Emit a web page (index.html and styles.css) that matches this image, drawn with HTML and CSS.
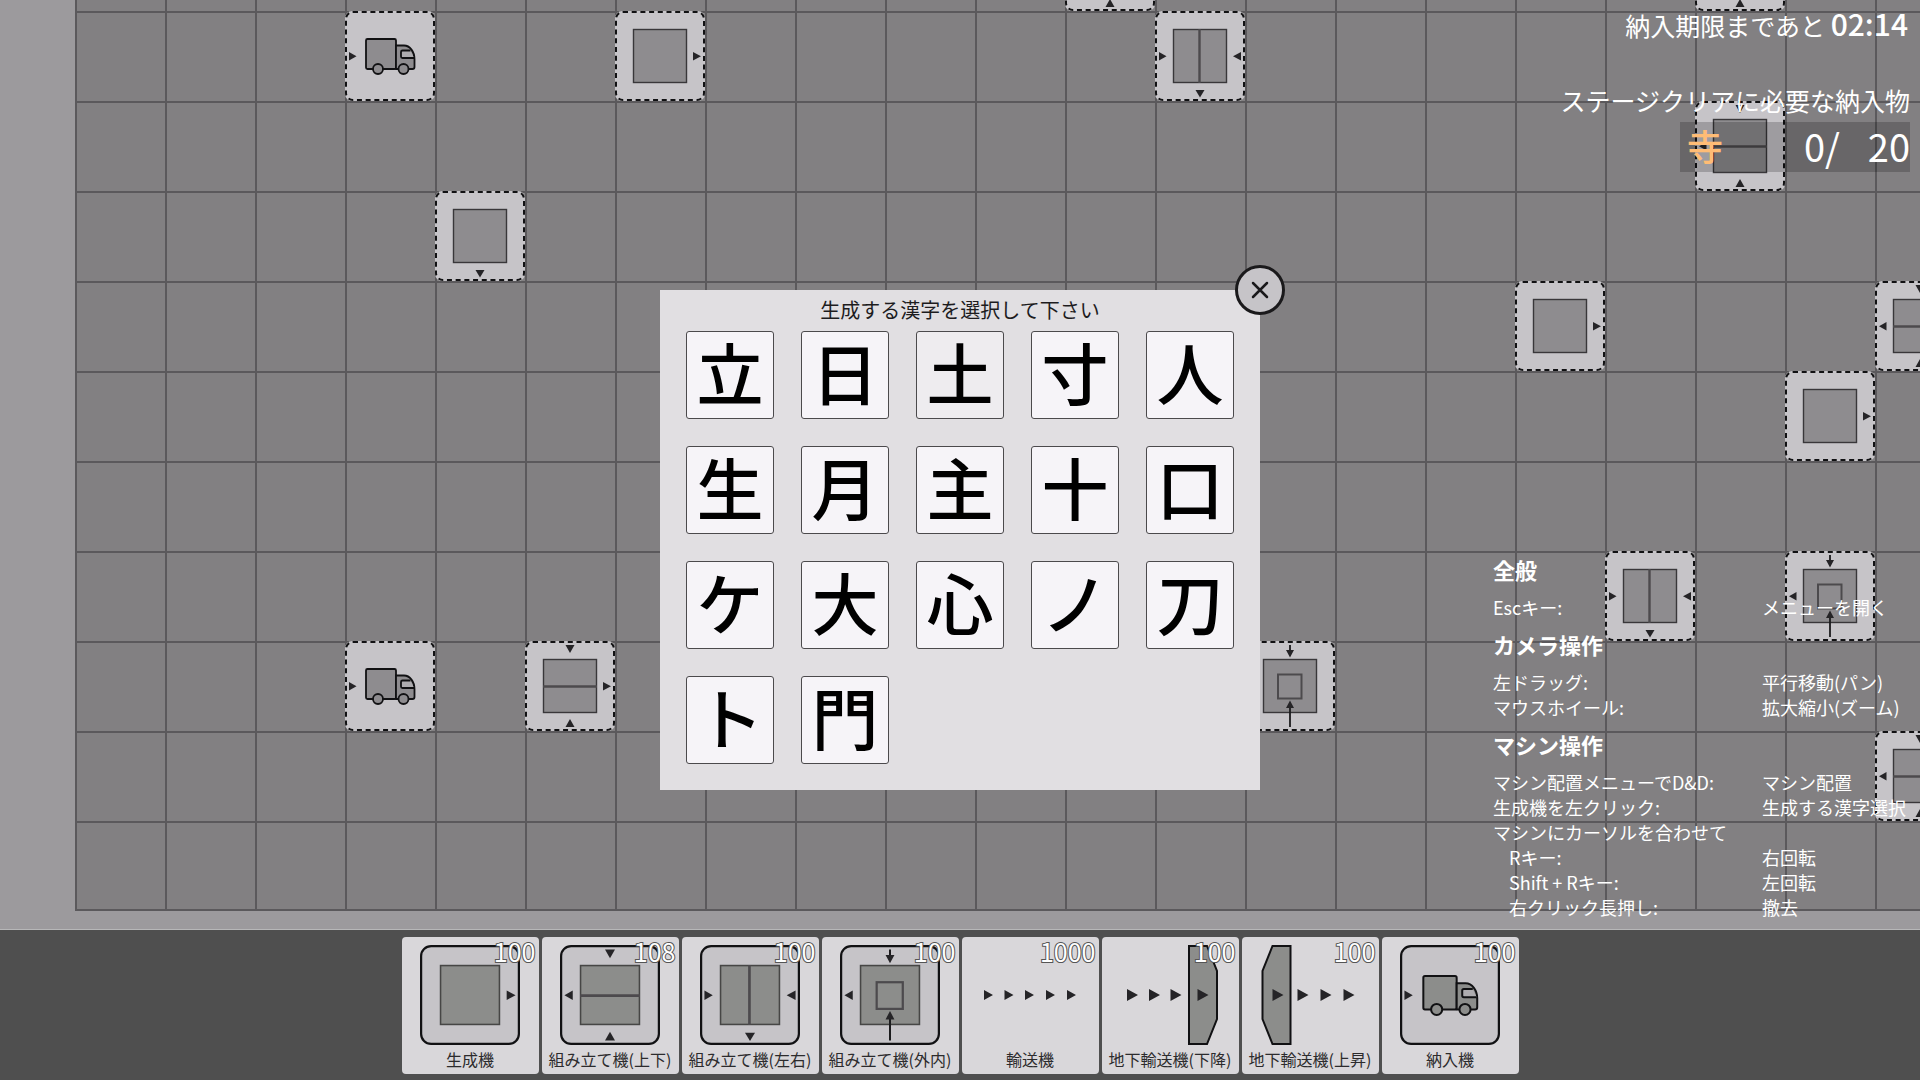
FILE: index.html
```html
<!DOCTYPE html>
<html lang="ja">
<head>
<meta charset="utf-8">
<title>漢字工場</title>
<link rel="stylesheet" href="styles.css">
</head>
<body>
<svg class="defs" aria-hidden="true">
  <symbol id="dashed" viewBox="0 0 90 90">
    <rect class="plate-back" x="0" y="0" width="90" height="90" rx="7"/>
    <rect class="plate-dashed" x="1" y="1" width="88" height="88" rx="7"/>
  </symbol>
  <symbol id="solid" viewBox="0 0 90 90">
    <rect class="plate-solid" x="1" y="1" width="88" height="88" rx="9"/>
  </symbol>
  <symbol id="square" viewBox="0 0 90 90">
    <rect class="body" x="18.5" y="18.5" width="53" height="53"/>
  </symbol>
  <symbol id="split-h" viewBox="0 0 90 90">
    <rect class="body" x="18.5" y="18.5" width="53" height="53"/>
    <path class="bar" d="M18 45.500H72"/>
  </symbol>
  <symbol id="split-v" viewBox="0 0 90 90">
    <rect class="body" x="18.5" y="18.5" width="53" height="53"/>
    <path class="bar" d="M44.500 18V72"/>
  </symbol>
  <symbol id="nested" viewBox="0 0 90 90">
    <rect class="body" x="18.5" y="18.5" width="53" height="53"/>
    <rect class="core" x="33" y="33.500" width="23.500" height="24"/>
    <path class="stem" d="M45 4V10M45 66V86"/>
    <path class="arrow" d="M41 9H49L45 16.500ZM41 67H49L45 59.500Z"/>
  </symbol>
  <symbol id="truck" viewBox="0 0 90 90">
    <rect class="line" x="21" y="28" width="30" height="30" rx="1.500"/>
    <path class="line" d="M51 34.500H59C65 34.500 69.500 41 69.500 48V56Q69.500 58 67.500 58H51Z"/>
    <path class="glass" d="M65.500 39.500H57.500Q56 39.500 56 41V45.500Q56 47 57.500 47H69"/>
    <circle class="wheel" cx="33" cy="58" r="5"/>
    <circle class="wheel" cx="58.500" cy="58" r="5"/>
  </symbol>
  <symbol id="w-right" viewBox="0 0 90 90"><path class="arrow" d="M4 41V49.500L11.500 45.200Z"/></symbol>
  <symbol id="w-left" viewBox="0 0 90 90"><path class="arrow" d="M11.500 41V49.500L4 45.200Z"/></symbol>
  <symbol id="e-right" viewBox="0 0 90 90"><path class="arrow" d="M78 41V49.500L86 45.200Z"/></symbol>
  <symbol id="e-left" viewBox="0 0 90 90"><path class="arrow" d="M86 41V49.500L78 45.200Z"/></symbol>
  <symbol id="n-down" viewBox="0 0 90 90"><path class="arrow" d="M40.500 4H49.500L45 12Z"/></symbol>
  <symbol id="s-down" viewBox="0 0 90 90"><path class="arrow" d="M40.500 79H49.500L45 86.500Z"/></symbol>
  <symbol id="s-up" viewBox="0 0 90 90"><path class="arrow" d="M40.500 86H49.500L45 78Z"/></symbol>
</svg>

<main class="map">
  <div class="board">
    <svg class="tile" style="--c:12;--r:1"><use href="#dashed"/><use href="#split-h"/><use href="#s-up"/></svg>
    <svg class="tile" style="--c:19;--r:1"><use href="#dashed"/><use href="#split-h"/><use href="#s-up"/></svg>
    <svg class="tile" style="--c:4;--r:2"><use href="#dashed"/><use href="#truck"/><use href="#w-right"/></svg>
    <svg class="tile" style="--c:7;--r:2"><use href="#dashed"/><use href="#square"/><use href="#e-right"/></svg>
    <svg class="tile" style="--c:13;--r:2"><use href="#dashed"/><use href="#split-v"/><use href="#w-right"/><use href="#e-left"/><use href="#s-down"/></svg>
    <svg class="tile" style="--c:19;--r:3"><use href="#dashed"/><use href="#split-h"/><use href="#n-down"/><use href="#s-up"/><use href="#w-left"/></svg>
    <svg class="tile" style="--c:5;--r:4"><use href="#dashed"/><use href="#square"/><use href="#s-down"/></svg>
    <svg class="tile" style="--c:17;--r:5"><use href="#dashed"/><use href="#square"/><use href="#e-right"/></svg>
    <svg class="tile" style="--c:21;--r:5"><use href="#dashed"/><use href="#split-h"/><use href="#n-down"/><use href="#s-up"/><use href="#w-left"/></svg>
    <svg class="tile" style="--c:20;--r:6"><use href="#dashed"/><use href="#square"/><use href="#e-right"/></svg>
    <svg class="tile" style="--c:18;--r:8"><use href="#dashed"/><use href="#split-v"/><use href="#w-right"/><use href="#e-left"/><use href="#s-down"/></svg>
    <svg class="tile" style="--c:20;--r:8"><use href="#dashed"/><use href="#nested"/><use href="#w-left"/></svg>
    <svg class="tile" style="--c:4;--r:9"><use href="#dashed"/><use href="#truck"/><use href="#w-right"/></svg>
    <svg class="tile" style="--c:6;--r:9"><use href="#dashed"/><use href="#split-h"/><use href="#n-down"/><use href="#s-up"/><use href="#e-right"/></svg>
    <svg class="tile" style="--c:14;--r:9"><use href="#dashed"/><use href="#nested"/><use href="#w-left"/></svg>
    <svg class="tile" style="--c:21;--r:10"><use href="#dashed"/><use href="#split-h"/><use href="#n-down"/><use href="#s-up"/><use href="#w-left"/></svg>
  </div>

  <section class="status">
    <p class="timer">納入期限まであと <time>02:14</time></p>
    <h2 class="goal-title">ステージクリアに必要な納入物</h2>
    <p class="goal"><span class="goal-kanji">寺</span><span class="goal-now">0/</span><span class="goal-max">20</span></p>
  </section>

  <section class="help">
    <h3>全般</h3>
    <dl>
      <dt>Escキー:</dt><dd>メニューを開く</dd>
    </dl>
    <h3>カメラ操作</h3>
    <dl>
      <dt>左ドラッグ:</dt><dd>平行移動(パン)</dd>
      <dt>マウスホイール:</dt><dd>拡大縮小(ズーム)</dd>
    </dl>
    <h3>マシン操作</h3>
    <dl>
      <dt>マシン配置メニューでD&amp;D:</dt><dd>マシン配置</dd>
      <dt>生成機を左クリック:</dt><dd>生成する漢字選択</dd>
      <dt class="wide">マシンにカーソルを合わせて</dt>
      <dt class="sub">Rキー:</dt><dd>右回転</dd>
      <dt class="sub">Shift + Rキー:</dt><dd>左回転</dd>
      <dt class="sub">右クリック長押し:</dt><dd>撤去</dd>
    </dl>
  </section>
</main>

<nav class="toolbar" aria-label="マシン配置">
  <button class="machine" type="button">
    <svg class="icon"><use href="#solid"/><use href="#square"/><use href="#e-right"/></svg>
    <span class="name">生成機</span><span class="count">100</span>
  </button>
  <button class="machine" type="button">
    <svg class="icon"><use href="#solid"/><use href="#split-h"/><use href="#n-down"/><use href="#s-up"/><use href="#w-left"/></svg>
    <span class="name">組み立て機(上下)</span><span class="count">108</span>
  </button>
  <button class="machine" type="button">
    <svg class="icon"><use href="#solid"/><use href="#split-v"/><use href="#w-right"/><use href="#e-left"/><use href="#s-down"/></svg>
    <span class="name">組み立て機(左右)</span><span class="count">100</span>
  </button>
  <button class="machine" type="button">
    <svg class="icon"><use href="#solid"/><use href="#nested"/><use href="#w-left"/></svg>
    <span class="name">組み立て機(外内)</span><span class="count">100</span>
  </button>
  <button class="machine" type="button">
    <svg class="icon" viewBox="0 0 100 100"><path class="arrow" d="M4 45V55L13 50ZM24.500 45V55L33.500 50ZM45 45V55L54 50ZM66 45V55L75 50ZM87 45V55L96 50Z"/></svg>
    <span class="name">輸送機</span><span class="count">1000</span>
  </button>
  <button class="machine" type="button">
    <svg class="icon" viewBox="0 0 100 100"><path class="tunnel" d="M69 1H87L97 26V74L87 99H69Z"/><path class="arrow" d="M7 44V56L18 50ZM29 44V56L40 50ZM50.500 44V56L61.500 50ZM77.500 44V56L88.500 50Z"/></svg>
    <span class="name">地下輸送機(下降)</span><span class="count">100</span>
  </button>
  <button class="machine" type="button">
    <svg class="icon" viewBox="0 0 100 100"><path class="tunnel" d="M30.500 1H12.500L2.500 26V74L12.500 99H30.500Z"/><path class="arrow" d="M12.500 44V56L23.500 50ZM37.500 44V56L48.500 50ZM60.500 44V56L71.500 50ZM83.500 44V56L94.500 50Z"/></svg>
    <span class="name">地下輸送機(上昇)</span><span class="count">100</span>
  </button>
  <button class="machine" type="button">
    <svg class="icon"><use href="#solid"/><use href="#truck"/><use href="#w-right"/></svg>
    <span class="name">納入機</span><span class="count">100</span>
  </button>
</nav>

<section class="picker" role="dialog" aria-labelledby="picker-title">
  <h1 id="picker-title">生成する漢字を選択して下さい</h1>
  <div class="choices">
    <button type="button">立</button>
    <button type="button">日</button>
    <button type="button" class="active">土</button>
    <button type="button">寸</button>
    <button type="button">人</button>
    <button type="button">生</button>
    <button type="button">月</button>
    <button type="button">主</button>
    <button type="button">十</button>
    <button type="button">口</button>
    <button type="button">ケ</button>
    <button type="button">大</button>
    <button type="button">心</button>
    <button type="button">ノ</button>
    <button type="button">刀</button>
    <button type="button">ト</button>
    <button type="button">門</button>
  </div>
  <button class="close" type="button" aria-label="閉じる">
    <svg viewBox="0 0 18 18"><path d="M2 2L16 16M16 2L2 16"/></svg>
  </button>
</section>
</body>
</html>
```

FILE: styles.css
```css
* {
  box-sizing: border-box;
}

body {
  margin: 0;
  min-height: 100vh;
  display: grid;
  grid-template-rows: 1fr auto;
  grid-template-columns: 100%;
  font-family: "Noto Sans CJK JP", sans-serif;
  background: #9c9a9d;
}

h1, h2, h3, p, dl, dd {
  margin: 0;
  font-weight: 400;
}

button {
  font: inherit;
  padding: 0;
  border: 0;
}

.defs {
  position: absolute;
  width: 0;
  height: 0;
}

/* Machine drawings */
.plate-back {
  fill: #c6c4c8;
}

.plate-dashed {
  fill: none;
  stroke: #111113;
  stroke-width: 2;
  stroke-dasharray: 5 3.7;
}

.plate-solid {
  fill: #c6c4c8;
  stroke: #111113;
  stroke-width: 2;
}

.body {
  fill: var(--body);
  stroke: var(--edge);
  stroke-width: 1.4;
}

.bar, .core {
  fill: none;
  stroke: #4c4a4d;
  stroke-width: 2.4;
}

.core {
  stroke-width: 2;
}

.stem {
  stroke: #1b1b1d;
  stroke-width: 1.8;
}

.arrow {
  fill: #252427;
}

.line, .wheel, .tunnel {
  fill: var(--body);
  stroke: #111113;
  stroke-width: 1.8;
}

.glass {
  fill: #aeacaf;
  stroke: #111113;
  stroke-width: 1.8;
}

.tunnel {
  stroke-width: 2;
}

/* Map */
.map {
  position: relative;
  overflow: hidden;
  border-bottom: 1px solid #b7b7b8;
}

.board {
  --line: #5b595c;
  display: grid;
  grid-template-columns: repeat(21, 90px);
  grid-template-rows: repeat(11, 90px);
  margin: -79px 0 0 75px;
  box-shadow: inset 0 -2px var(--line);
  background:
    linear-gradient(90deg, var(--line) 2px, transparent 2px) 0 0 / 90px 90px,
    linear-gradient(var(--line) 2px, transparent 2px) 0 0 / 90px 90px,
    #828082;
}

.tile {
  --body: #8e8c8f;
  --edge: #39373a;
  grid-column: var(--c);
  grid-row: var(--r);
  width: 90px;
  height: 90px;
}

.status {
  position: absolute;
  top: 0;
  right: 10px;
  display: flex;
  flex-direction: column;
  align-items: flex-end;
  color: #fff;
}

.timer {
  padding-right: 2px;
  font-size: 25px;
  line-height: 46px;
}

.timer time {
  font-size: 30px;
  font-weight: 500;
}

.goal-title {
  margin-top: 32px;
  font-size: 25px;
  line-height: 40px;
}

.goal {
  display: flex;
  align-items: center;
  width: 230px;
  height: 50px;
  margin-top: 2px;
  padding: 0 0 4px 7px;
  font-size: 38px;
  background: rgba(0, 0, 0, 0.2);
}

.goal-kanji {
  margin-right: auto;
  font-size: 36px;
  font-weight: 500;
  color: #ffbc75;
}

.goal-max {
  width: 70px;
  text-align: right;
}

.help {
  position: absolute;
  right: 0;
  bottom: 9px;
  width: 427px;
  color: #fff;
  font-size: 18px;
  line-height: 25px;
}

.help h3 {
  margin: 12px 0 13px;
  font-size: 22px;
  font-weight: 700;
  line-height: 25px;
}

.help dl {
  display: grid;
  grid-template-columns: 269px 1fr;
}

.help .wide {
  grid-column: 1 / -1;
}

.help .sub {
  padding-left: 16px;
}

/* Machine bar */
.toolbar {
  display: flex;
  justify-content: center;
  gap: 3px;
  padding: 7px 0 6px;
  background: #4f4f4f;
}

.machine {
  --body: #8c8d8b;
  --edge: #464645;
  position: relative;
  display: flex;
  flex-direction: column;
  align-items: center;
  gap: 2px;
  width: 137px;
  padding: 8px 0 3px;
  border-radius: 4px;
  background: #d9d7da;
  color: #2c2b2d;
}

.icon {
  width: 100px;
  height: 100px;
}

.name {
  font-size: 16px;
  line-height: 24px;
  white-space: nowrap;
}

.count {
  position: absolute;
  top: 0;
  right: 3px;
  font-size: 25px;
  line-height: 28px;
  color: #fff;
  -webkit-text-stroke: 2px #555;
  paint-order: stroke fill;
}

/* Kanji picker */
.picker {
  position: fixed;
  top: 50%;
  left: 50%;
  translate: -50% -50%;
  width: 600px;
  min-height: 500px;
  padding: 5px 26px 26px;
  background: #e1dfe2;
}

.picker h1 {
  margin-bottom: 6px;
  font-size: 20px;
  line-height: 30px;
  text-align: center;
  color: #1d1c1e;
}

.choices {
  display: grid;
  grid-template-columns: repeat(5, 88px);
  gap: 27px;
}

.choices button {
  height: 88px;
  padding-bottom: 8px;
  border: 1px solid #4b4a4c;
  border-radius: 3px;
  background: #f6f4f8;
  color: #000;
  font-size: 67px;
  font-weight: 500;
  line-height: 78px;
}

.choices .active {
  background: #eeecef;
}

.close {
  position: absolute;
  top: -25px;
  right: -25px;
  display: grid;
  place-items: center;
  width: 50px;
  height: 50px;
  border: 3px solid #1a191b;
  border-radius: 50%;
  background: #c6c4c8;
}

.close svg {
  width: 18px;
  height: 18px;
  stroke: #1a191b;
  stroke-width: 2.5;
  stroke-linecap: round;
}
```
